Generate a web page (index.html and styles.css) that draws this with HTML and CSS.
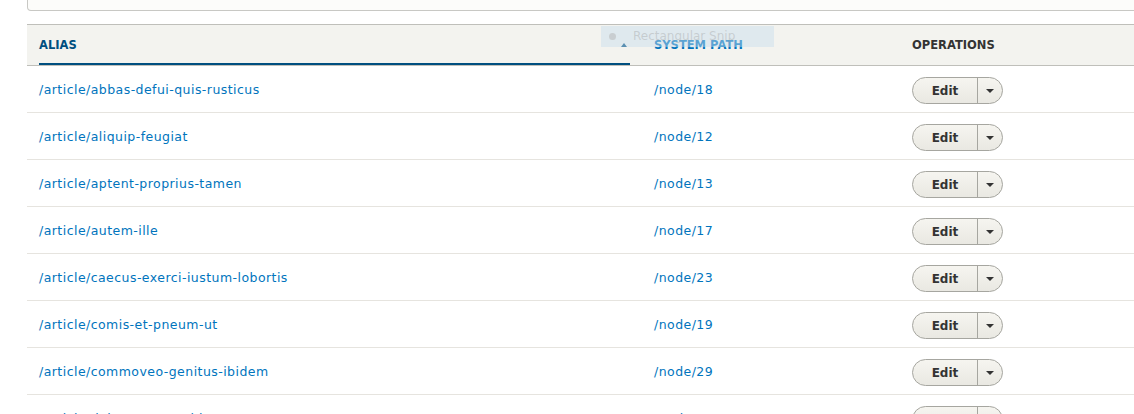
FILE: index.html
```html
<!DOCTYPE html>
<html>
<head>
<meta charset="utf-8">
<link rel="stylesheet" href="styles.css">
</head>
<body>
<div class="page">
  <div class="filter-box"></div>
  <table class="aliases">
    <thead>
      <tr>
        <th class="col-alias is-active"><a href="#">Alias<span class="sort-up"></span></a></th>
        <th class="col-path"><a href="#">System path</a></th>
        <th class="col-ops">Operations</th>
      </tr>
    </thead>
    <tbody>
      <tr><td><a href="#">/article/abbas-defui-quis-rusticus</a></td><td><a href="#">/node/18</a></td><td><div class="dropbutton"><span class="db-main">Edit</span><span class="db-toggle"><i></i></span></div></td></tr>
      <tr><td><a href="#">/article/aliquip-feugiat</a></td><td><a href="#">/node/12</a></td><td><div class="dropbutton"><span class="db-main">Edit</span><span class="db-toggle"><i></i></span></div></td></tr>
      <tr><td><a href="#">/article/aptent-proprius-tamen</a></td><td><a href="#">/node/13</a></td><td><div class="dropbutton"><span class="db-main">Edit</span><span class="db-toggle"><i></i></span></div></td></tr>
      <tr><td><a href="#">/article/autem-ille</a></td><td><a href="#">/node/17</a></td><td><div class="dropbutton"><span class="db-main">Edit</span><span class="db-toggle"><i></i></span></div></td></tr>
      <tr><td><a href="#">/article/caecus-exerci-iustum-lobortis</a></td><td><a href="#">/node/23</a></td><td><div class="dropbutton"><span class="db-main">Edit</span><span class="db-toggle"><i></i></span></div></td></tr>
      <tr><td><a href="#">/article/comis-et-pneum-ut</a></td><td><a href="#">/node/19</a></td><td><div class="dropbutton"><span class="db-main">Edit</span><span class="db-toggle"><i></i></span></div></td></tr>
      <tr><td><a href="#">/article/commoveo-genitus-ibidem</a></td><td><a href="#">/node/29</a></td><td><div class="dropbutton"><span class="db-main">Edit</span><span class="db-toggle"><i></i></span></div></td></tr>
      <tr><td><a href="#">/article/dolore-nunc-valde</a></td><td><a href="#">/node/24</a></td><td><div class="dropbutton"><span class="db-main">Edit</span><span class="db-toggle"><i></i></span></div></td></tr>
    </tbody>
  </table>
  <div class="snip"><span class="snip-dot"></span>Rectangular Snip</div>
</div>
</body>
</html>
```

FILE: styles.css
```css
html, body {
  margin: 0;
  padding: 0;
  background: #fff;
  overflow: hidden;
}
body {
  font-family: "DejaVu Sans", "Liberation Sans", sans-serif;
  font-size: 12px;
  color: #333;
}
.page {
  position: relative;
  padding-left: 27px;
  width: 1300px;
}
.filter-box {
  height: 10px;
  background: #fcfcfa;
  border: 1px solid #c8c8c4;
  border-top: none;
  border-radius: 0 0 0 4px;
  margin-bottom: 13px;
}
.aliases {
  border-collapse: collapse;
  width: 1200px;
  table-layout: fixed;
}
.aliases th {
  background: #f3f3ef;
  border-top: 1px solid #bfbfba;
  border-bottom: 1px solid #bfbfba;
  height: 40px;
  padding: 0 12px;
  text-align: left;
  text-transform: uppercase;
  font-weight: bold;
  font-size: 11.5px;
  color: #333;
  vertical-align: middle;
}
.col-alias { width: 591px; }
.col-path { width: 234px; }
.aliases th a {
  color: #0074bd;
  text-decoration: none;
  display: block;
  position: relative;
}
.aliases th.is-active a {
  color: #004f80;
}
.aliases th.is-active a::after {
  content: "";
  position: absolute;
  left: 0;
  right: 0;
  bottom: -13px;
  border-bottom: 2px solid #004f80;
}
.sort-up {
  position: absolute;
  right: 3px;
  top: 5px;
  width: 0;
  height: 0;
  border-left: 3.5px solid transparent;
  border-right: 3.5px solid transparent;
  border-bottom: 4px solid #004f80;
}
.aliases td {
  height: 46px;
  padding: 0 12px;
  border-bottom: 1px solid #e6e4df;
  vertical-align: middle;
}
.aliases td a {
  color: #0074bd;
  text-decoration: none;
  font-size: 12.5px;
  letter-spacing: 0.45px;
}
.dropbutton {
  display: inline-flex;
  height: 27px;
  margin-top: 3px;
  border: 1px solid #a6a6a0;
  border-radius: 14px;
  background: linear-gradient(#f6f5f0, #e9e8e2);
  box-sizing: border-box;
  overflow: hidden;
}
.db-main {
  width: 64px;
  display: flex;
  align-items: center;
  justify-content: center;
  font-weight: bold;
  color: #333;
  font-size: 12px;
  border-right: 1px solid #a6a6a0;
}
.db-toggle {
  width: 24px;
  display: flex;
  align-items: center;
  justify-content: center;
}
.db-toggle i {
  width: 0;
  height: 0;
  border-left: 4px solid transparent;
  border-right: 4px solid transparent;
  border-top: 4px solid #333;
  margin-top: 1px;
}
.snip {
  position: absolute;
  left: 601px;
  top: 26px;
  width: 173px;
  height: 21px;
  background: rgba(200, 222, 238, 0.45);
  color: rgba(150, 150, 150, 0.35);
  font-size: 12px;
  line-height: 21px;
  box-sizing: border-box;
  padding-left: 32px;
}
.snip-dot {
  position: absolute;
  left: 8px;
  top: 7px;
  width: 7px;
  height: 7px;
  border-radius: 50%;
  background: rgba(180, 180, 180, 0.5);
}
```
